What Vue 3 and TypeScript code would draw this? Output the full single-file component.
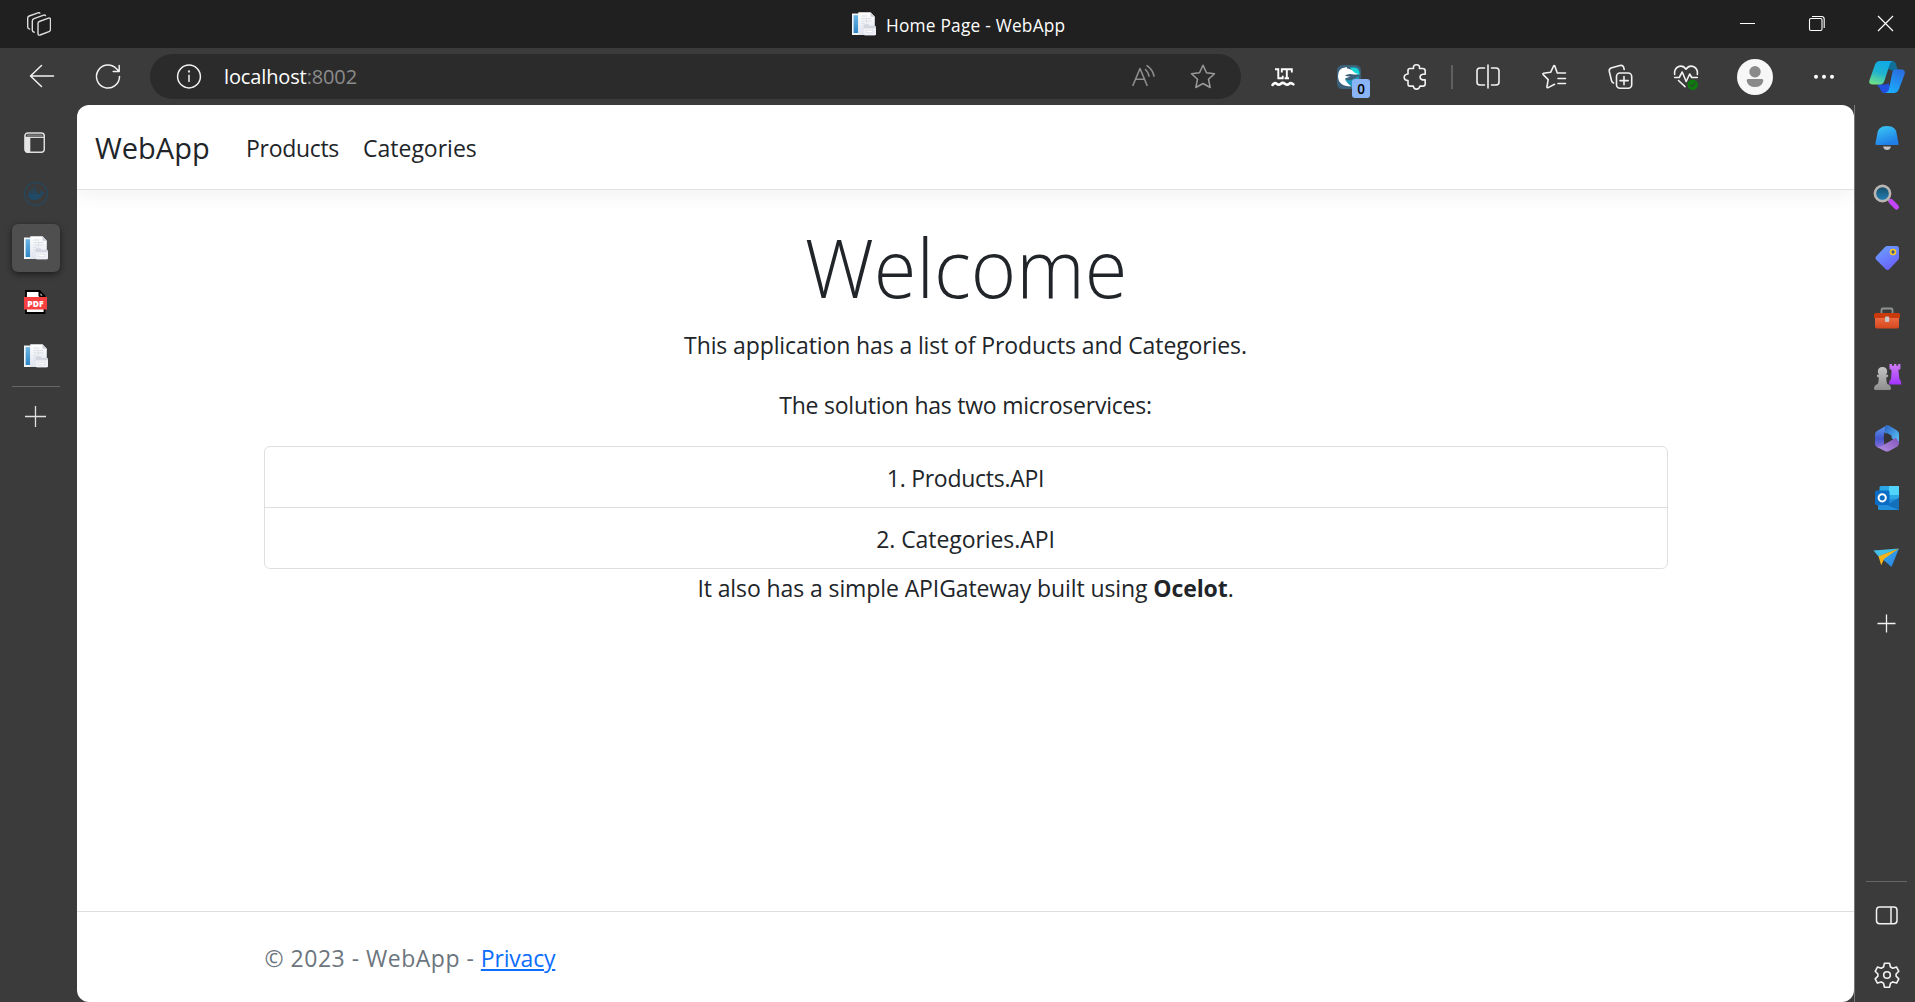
<script setup lang="ts">
interface Service {
  label: string
  key: 'products' | 'categories'
}

const services: Service[] = [
  { key: 'products', label: '1. Products.API' },
  { key: 'categories', label: '2. Categories.API' },
]
</script>

<template>
  <div class="browser">
    <svg class="defs" width="0" height="0" aria-hidden="true">
      <defs>
        <linearGradient id="gPage" x1="0" y1="0" x2="0" y2="1"><stop offset="0" stop-color="#fff" /><stop offset="1" stop-color="#dfe3ee" /></linearGradient>
        <linearGradient id="gBlue" x1="0" y1="0" x2="0" y2="1"><stop offset="0" stop-color="#6cb6e4" /><stop offset="1" stop-color="#2f86c5" /></linearGradient>
        <linearGradient id="gBell" x1="0" y1="0" x2="0.4" y2="1"><stop offset="0" stop-color="#3ccbf4" /><stop offset="1" stop-color="#1f7fe8" /></linearGradient>
        <linearGradient id="gTag" x1="0" y1="0" x2="0.6" y2="1"><stop offset="0" stop-color="#6aa5ff" /><stop offset="1" stop-color="#6a62fb" /></linearGradient>
        <linearGradient id="gLens" x1="0" y1="0" x2="0" y2="1"><stop offset="0" stop-color="#174a66" /><stop offset="1" stop-color="#2283b8" /></linearGradient>
        <linearGradient id="gBox" x1="0" y1="0" x2="0" y2="1"><stop offset="0" stop-color="#f0714b" /><stop offset="1" stop-color="#d6481d" /></linearGradient>
        <linearGradient id="gRook" x1="0" y1="0" x2="0" y2="1"><stop offset="0" stop-color="#cf7cf5" /><stop offset="1" stop-color="#a233ff" /></linearGradient>
        <linearGradient id="gPawn" x1="0" y1="0" x2="0" y2="1"><stop offset="0" stop-color="#c4c4c4" /><stop offset="1" stop-color="#8e8e8e" /></linearGradient>
        <linearGradient id="gM1" x1="0" y1="0" x2="0" y2="1"><stop offset="0" stop-color="#5f9cf0" /><stop offset="0.6" stop-color="#4257cc" /><stop offset="1" stop-color="#8a6fd8" /></linearGradient>
        <linearGradient id="gM2" x1="0" y1="0" x2="1" y2="1"><stop offset="0" stop-color="#2b62c4" /><stop offset="1" stop-color="#5cc8f8" /></linearGradient>
        <linearGradient id="gM3" x1="0" y1="1" x2="1" y2="0"><stop offset="0" stop-color="#b592e6" /><stop offset="1" stop-color="#8153b8" /></linearGradient>
        <linearGradient id="gPlane" x1="0" y1="0" x2="1" y2="1"><stop offset="0" stop-color="#36b5e8" /><stop offset="1" stop-color="#2a7be6" /></linearGradient>
        <linearGradient id="gCop1" x1="0.6" y1="0" x2="0.3" y2="1"><stop offset="0" stop-color="#0fa9e8" /><stop offset="0.5" stop-color="#1fb3cf" /><stop offset="1" stop-color="#6fe08a" /></linearGradient>
        <linearGradient id="gCop2" x1="0.6" y1="0" x2="0.2" y2="1"><stop offset="0" stop-color="#2a6fe0" /><stop offset="1" stop-color="#19b0ff" /></linearGradient>
        <symbol id="pageIcon" viewBox="0 0 24 24">
          <path d="M0 1.5h9v21.5H0z" fill="#f4f7fa" /><path d="M1.6 3.2h4.6v17.8H1.6z" fill="url(#gBlue)" />
          <path d="M6.3 0.3h12.2l4.3 4.4v18.2H6.3z" fill="url(#gPage)" />
          <path d="M18.5 0.3v4.4h4.3z" fill="#c9cdd6" />
          <path d="M9.5 4h6M9.5 6.5h10M9.5 9h10M9.5 11.5h3M9.5 14h3M9.5 16.5h1.5M14.5 6.5v5" stroke="#dcdfe6" stroke-width="1" fill="none" />
          <path d="M11.7 13.5q0-1.2 1.2-1.2h3.6l1 1.5h5.3q1.2 0 1.2 1.2v7q0 1.3-1.3 1.3h-9.7q-1.3 0-1.3-1.3z" fill="#d3d6df" />
          <path d="M11.7 16.2h12.3v5.6q0 1.5-1.3 1.5h-9.7q-1.3 0-1.3-1.5z" fill="#eff0f6" /><path d="M14.5 18.5h6v2h-6z" fill="#fff" stroke="#dcdde6" stroke-width=".6" />
        </symbol>
      </defs>
    </svg>

    <header class="titlebar">
      <svg class="workspaces" width="24" height="24" viewBox="0 0 24 24" fill="none" stroke="#dedede" stroke-width="1.4" stroke-linejoin="round" stroke-linecap="round">
        <path d="M12.3 9.5 21.5 6.2q2-.6 2 1.4v9.8q0 1.6-1.5 2.2l-9 3.4q-2 .6-2-1.4V11.4q0-1.4 1.3-1.9z" />
        <path d="M18.5 3.6q-.6-.8-1.8-.4L7 6.700Q5.300 7.300 5.300 9v9.300q0 1.600 1.900 1.900" />
        <path d="M12.800 1.200q-.6-.8-1.800-.4L2.200 4Q.7 4.600.7 6.200v8.900q0 1.600 1.900 2" />
      </svg>
      <div class="tab-title">
        <svg width="24" height="24"><use href="#pageIcon" /></svg>
        <span class="tab-name">Home Page - WebApp</span>
      </div>
      <div class="win-controls">
        <svg width="69" height="48" fill="none" stroke="#fff" stroke-width="1"><path d="M27 23.500h15" /></svg>
        <svg width="69" height="48" fill="none" stroke="#fff" stroke-width="1.1"><rect x="27.500" y="18.500" width="12.500" height="12" rx="1.500" /><path d="M30 16.500h9.500q2.700 0 2.700 2.700V28" /></svg>
        <svg width="69" height="48" fill="none" stroke="#fff" stroke-width="1.2"><path d="M27 16l15 15M42 16 27 31" /></svg>
      </div>
    </header>

    <div class="toolbar">
      <div class="nav-buttons">
        <svg width="36" height="36" fill="none" stroke="#f2f2f2" stroke-width="1.5" stroke-linecap="round" stroke-linejoin="round"><path d="M29.500 17H6.500M17.500 6.500 6.500 17l11 10.500" /></svg>
        <svg width="36" height="36" fill="none" stroke="#f2f2f2" stroke-width="1.5" stroke-linecap="round" stroke-linejoin="round"><path d="M29.500 17.500A11.500 11.500 0 1 1 26.500 9.800L29 12.300M29.200 6.500v6h-6" /></svg>
      </div>
      <div class="address">
        <svg width="36" height="36" fill="none" stroke="#f2f2f2" stroke-width="1.5"><circle cx="18" cy="17.500" r="11.400" /><path d="M18 15.800v7.200" /><circle cx="18" cy="12.500" r=".4" /></svg>
        <span class="url">localhost<span class="port">:8002</span></span>
        <svg class="read-aloud" width="36" height="36" fill="none" stroke="#8e8e8e" stroke-width="1.600" stroke-linecap="round" stroke-linejoin="round"><path d="M8 26.300 15 9.500l7 16.800M10.500 20.300h9M20.500 10.500q2.700 2.700 3.500 6.500M22 6.700q5.500 3.800 7 10.300" /></svg>
        <svg class="star" width="36" height="36" fill="none" stroke="#9a9a9a" stroke-width="1.500" stroke-linejoin="round"><path d="M18 6.200l3.500 7.500 8 1-6 5.600 1.700 8.200L18 24.500l-7.200 4 1.700-8.200-6-5.600 8-1z" /></svg>
      </div>
      <div class="actions">
        <svg width="36" height="36" fill="none" stroke="#fff"><path d="M10 10.200h3.300v9h4.400v-2.400M16.800 13.500v-3.300h10V13.500M21.800 10.200v9M19.600 19.200h4.400" stroke-width="1.900" /><path d="M7.500 26q2-3 4.200-1.200t4 0 4.200 0 4.200 0 4.300.6" stroke-width="2.600" stroke-linecap="round" stroke-linejoin="round" /></svg>
        <div class="ext">
          <svg width="36" height="36"><rect x="6" y="6" width="24" height="24" rx="5.500" fill="#3b6079" /><path d="M19 8.500h5q5 1 4.500 7.500l-6-2z" fill="#14d8d8" /><path d="M7 17Q7 9 14 8.500l1.500-.5.8 1.500q5 .8 7 4l4 1.500q-3 1-6 .3-4-1-7.500 1.200 2 1 5.500 1.300l-5 1.500q0 3 3.500 4.500l4 3.500Q7 28 7 17z" fill="#fff" /><path d="M14 20q4 2 8 .5 3-2 6-3.500-.5 8-6 11-6-3-8-8z" fill="#2298bd" /></svg>
          <span class="badge">0</span>
        </div>
        <svg width="36" height="36" fill="none" stroke="#f2f2f2" stroke-width="1.600" stroke-linejoin="round"><path d="M10 11.500q0-2 2-2h3.500q-.6-3.800 3-3.800t3 3.800h3.200q2.500 0 2.500 2.300v3.500h-2.500q-2.600.4-2.600 2.800t2.600 2.800h2.500v4q0 2.200-2.300 2.200h-3q-.6 3-3.400 3t-3.200-3H12q-2 0-2-2.200v-3.300q-3.800-.3-3.800-3.300t3.800-3.300z" /></svg>
        <i class="separator"></i>
        <svg width="36" height="36" fill="none" stroke="#f2f2f2" stroke-width="1.600" stroke-linecap="round"><path d="M18 6v23M14.500 9H10q-3 0-3 3v11q0 3 3 3h4.500M21.500 9H26q3 0 3 3v11q0 3-3 3h-4.500" /></svg>
        <svg width="36" height="36" fill="none" stroke="#f2f2f2" stroke-width="1.600" stroke-linecap="round" stroke-linejoin="round"><path d="M29.500 14h-8.200L18.800 7q-.6-1-1.200 0l-3 6.300-7 1q-1.200.4-.4 1.300l5 5-1.300 7.200q0 1.300 1.200.8l6.500-3.300M22 19.500h7.500M22 24.500h7.500" /></svg>
        <svg width="36" height="36" fill="none" stroke="#f2f2f2" stroke-width="1.600" stroke-linecap="round" stroke-linejoin="round"><rect x="14.500" y="14" width="15.200" height="15.200" rx="3.500" /><path d="M22 17.500v8.200M18 21.600h8.200M11.500 24q-1.500-.5-2-2.500L7.300 12.500q-.5-2.500 1.700-3.500L18 6.500q2.800-.5 3.600 1.600l.6 2.400" /></svg>
        <svg width="36" height="36" fill="none" stroke="#f2f2f2" stroke-width="1.600" stroke-linecap="round" stroke-linejoin="round"><path d="M6.700 15.500q-.8-5 3-7.500 5-2.500 8.300 2.200Q21.300 5.500 26.300 8q3.800 2.500 3 7.500M6.700 18.500h4.500l3-5.500 4 9.500 3.500-7.500 2 3.500h5.600M10.500 21.500l6.500 6.200" /><circle cx="24.700" cy="25.700" r="5.200" fill="#0f7b0f" stroke="none" /><path d="M22.300 25.800l1.700 1.700 3.200-3.500" stroke="#2c4a2c" stroke-width="1.200" /></svg>
        <svg class="profile" width="36" height="36"><circle cx="18" cy="18" r="18" fill="#f7f7f7" /><circle cx="18" cy="12.800" r="5.700" fill="#8a8a8a" /><path d="M11.200 20h13.600q1.900 0 1.500 2-1.500 6-8.300 6t-8.300-6q-.4-2 1.500-2z" fill="#8a8a8a" /></svg>
        <svg width="36" height="36" fill="#fff"><circle cx="10" cy="17.800" r="2" /><circle cx="18" cy="17.800" r="2" /><circle cx="26" cy="17.800" r="2" /></svg>
        <svg class="copilot" width="36" height="36"><path d="M19 2h4.500q2.500 0 3.500 3l1.500 5.500h5L24 12l-7-3z" fill="#116e96" /><path d="M8 25.500h9l2.500-1.500 2 6-4 4h-2.500q-2.500 0-3.500-3.500z" fill="#2150e0" /><path d="M10.500 2H24q-2.500.5-3.500 4l-5.300 16.500q-1.200 3-4 3H3.500Q-.5 25.500.4 21.500L6 5.500Q7.500 2 10.500 2z" fill="url(#gCop1)" /><path d="M26 10.500h6.500q4 0 3.200 4.500L30 30q-1.500 4-5 4h-9q3-.5 4-4l3-15q.8-4.500 3-4.500z" fill="url(#gCop2)" /></svg>
      </div>
    </div>

    <div class="body">
      <aside class="left">
        <svg class="tabs-toggle" width="21" height="21"><rect x=".9" y=".9" width="19.400" height="19.400" rx="3" fill="none" stroke="#dedede" stroke-width="1.500" /><path d="M1 5.300h19.500" stroke="#dedede" stroke-width="1.300" /><path d="M1 5h5.300v15.500H3.500Q1 20.500 1 18z" fill="#e4e4e4" /><path d="M3 3.200h15.500" stroke="#777" stroke-width="1.800" /></svg>
        <svg class="docker" width="24" height="24"><circle cx="12" cy="12" r="11.300" fill="none" stroke="#25485f" stroke-width="1.200" /><path d="M4 12h12.500q.6-1.500 0-2.700l.8-1.100q1.500 1 1.500 2.500 1.200-.3 2 .3-.8 1.600-2.800 1.700-2.300 5.500-8 5.300Q4.500 18 4 12zM4.500 9.500h2v2h-2zM7 9.500h2v2H7zM9.500 9.500h2v2h-2zM12 9.500h2v2h-2zM7 7h2v2H7zM9.500 7h2v2h-2zM10.500 4.500h1.500v2h-1.500z" fill="#1f4a68" /></svg>
        <div class="active-tab"><svg width="24" height="24"><use href="#pageIcon" /></svg></div>
        <svg class="pdf" width="24" height="24"><path d="M2 1h13.500l5 5v17H2z" fill="#fff" stroke="#000" stroke-width="1.800" /><path d="M14.500 0 21.500 7h-5.500q-1.500 0-1.500-1.500z" fill="#000" /><path d="M16.500 3.300l2.200 2.200h-2.200z" fill="#ddd" /><rect y="7" width="23" height="12.500" fill="#f94040" /><text x="11.400" y="16.600" text-anchor="middle" font-family="Open Sans, sans-serif" font-size="8.500" font-weight="800" fill="#fff">PDF</text></svg>
        <svg class="second-page" width="24" height="24"><use href="#pageIcon" /></svg>
        <i class="rule"></i>
        <svg class="plus" width="21" height="21" stroke="#e0e0e0" stroke-width="1.300"><path d="M10.500 0v21M0 10.500h21" /></svg>
      </aside>

      <main class="page">
        <nav class="navbar">
          <a class="brand">WebApp</a>
          <a class="link products">Products</a>
          <a class="link">Categories</a>
        </nav>
        <section class="content">
          <h1>Welcome</h1>
          <p class="line one">This application has a list of Products and Categories.</p>
          <p class="line two">The solution has two microservices:</p>
          <ol class="list">
            <li v-for="s in services" :key="s.key" :class="s.key">{{ s.label }}</li>
          </ol>
          <p class="line three">It also has a simple APIGateway built using <b>Ocelot</b>.</p>
        </section>
        <footer class="footer">© 2023 - WebApp - <a>Privacy</a></footer>
      </main>

      <aside class="right">
        <svg width="36" height="60"><path d="M8 27.500q0-9.500 10-9.500t10 9.500l1.500 8q.3 1.500-1 1.500h-21q-1.300 0-1-1.500z" fill="url(#gBell)" /><path d="M14 38.500h8q-1 3.500-4 3.500t-4-3.500z" fill="#c4c4c4" /></svg>
        <svg width="36" height="60"><path d="M19.500 31.500l3 3" stroke="#999" stroke-width="3" /><path d="M22 33.500l5.500 5.500" stroke="#c445f7" stroke-width="5" stroke-linecap="round" /><circle cx="13.500" cy="25.500" r="7.600" fill="url(#gLens)" stroke="#b9b5b2" stroke-width="2.600" /></svg>
        <svg width="36" height="60"><path d="M18.500 18h9q2.500 0 2.500 2.500v9q0 1.500-1 2.500l-8.500 9q-2 2-4 0l-9-9q-2-2 0-4l8.500-9q1-1 2.500-1z" fill="url(#gTag)" /><circle cx="24" cy="24" r="2.500" fill="#3c5099" stroke="#f5cb20" stroke-width="1.700" /></svg>
        <svg width="36" height="60"><path d="M12.500 25v-3q0-1.500 1.500-1.500h8q1.500 0 1.500 1.500v3" fill="none" stroke="#8f9393" stroke-width="1.800" /><rect x="6" y="27" width="24" height="13.500" rx="2" fill="url(#gBox)" /><path d="M5 26.500q0-1.500 1.500-1.500h23q1.500 0 1.500 1.500V30H5z" fill="#c93a0d" /><rect x="16" y="28.500" width="4.200" height="5.500" rx="1" fill="#c7c7c7" /></svg>
        <svg width="36" height="60"><path d="M20.500 16h2.400v1.800H25V16h2.400v1.800h1.800V16h2.200v5l-2 1 1 9q2 1.500 2 5.500H20q0-4 2-5.500l.6-9-2.100-1z" fill="url(#gRook)" /><path d="M13.500 19q4.700 0 4.700 4.700 0 1.700-1.200 3h2q.6 1.700-.6 2.500h-1.200q0 4.300 1 6.800 3.800 1.200 3.800 4.500 0 1.500-1.500 1.500H6.500Q5 42 5 40.500 5 37.200 8.800 36q1-2.500 1-6.800H8.600q-1.200-.8-.6-2.500h2q-1.200-1.300-1.200-3Q8.800 19 13.500 19z" fill="url(#gPawn)" /></svg>
        <svg width="36" height="60"><path d="M18 17.200 8 23q-2 1.200-2 3.500v9q0 2.300 2 3.500l2 .6 5-2.600V25l4-2.500z" fill="url(#gM1)" /><path d="M16 18.200q2.200-1.700 4.400-.5L28 22.500q2 1.200 2 3.500v9l-9-6-5-4q-1-4 0-6.800z" fill="url(#gM2)" /><path d="M7.500 38.800q2.500.4 5-.8l14.500-8.300 3 4.300v1.200q0 2.300-2 3.500l-7.800 4.200q-2.200 1.200-4.400 0z" fill="url(#gM3)" /><path d="M15.800 26.200 18 25l4 2.300q.6.400.6 1.200v3.200L18 34.400l-3.200-1.900v-4.800q0-1 1-1.500z" fill="#343438" /></svg>
        <svg width="36" height="60"><rect x="10.500" y="18" width="19.500" height="18" rx="1.500" fill="#2aa7e4" /><path d="M20 18h10v9H20z" fill="#50d4fb" /><path d="M9 31l21 0v9.500q0 1.500-1.500 1.500H10.500Q9 42 9 40.500z" fill="#1f8fdd" /><path d="M30 29.500 18 37l12 5z" fill="#1470ba" /><rect x="6" y="22.500" width="14.500" height="14.500" rx="1.500" fill="#0a6cc5" /><circle cx="13.200" cy="29.800" r="3.600" fill="none" stroke="#fff" stroke-width="2" /></svg>
        <svg width="36" height="60"><path d="M4.500 22.500 30 20.500l-20.500 8z" fill="#44bfe6" /><path d="M30 20.500 22.500 39l-10-9z" fill="url(#gPlane)" /><path d="M30 20.500 9.500 28.300l2.700 9 3-6.500z" fill="#f7b51a" /></svg>
        <svg class="add" width="36" height="36" stroke="#f2f2f2" stroke-width="1.300"><path d="M17.500 8.500v18M8.500 17.500h18" /></svg>
        <div class="bottom">
          <i class="rule"></i>
          <svg width="36" height="36" fill="none" stroke="#f2f2f2" stroke-width="1.500"><rect x="7.500" y="9" width="20.500" height="16.700" rx="3.200" /><path d="M22 9v16.700" /></svg>
          <svg class="gear" width="36" height="36" fill="none" stroke="#f2f2f2" stroke-width="1.600" stroke-linejoin="round"><path d="M15.500 6.200h5l1 3.800 2.300 1.300 3.800-1.200 2.200 4.200-2.700 2.700v2.200l2.700 2.600-2.200 4.300-3.800-1.200-2.300 1.300-1 4h-5l-1-4-2.300-1.300-3.800 1.200-2.200-4.300 2.700-2.600v-2.200l-2.700-2.700 2.200-4.200 3.800 1.200 2.300-1.300z" /><circle cx="18" cy="18" r="3.300" /></svg>
        </div>
      </aside>
    </div>
  </div>
</template>

<style>
body { margin: 0; background: #3b3b3b; overflow: hidden; }
</style>

<style scoped>
.browser { height: 1002px; display: flex; flex-direction: column; background: #3b3b3b; font-family: "Open Sans", "Noto Sans", sans-serif; overflow: hidden; }
.defs { position: absolute; }
svg { display: block; flex: none; }
.titlebar { height: 48px; flex: none; background: #202020; display: flex; box-sizing: border-box; padding-left: 27px; }
.workspaces { margin-top: 12px; }
.tab-title { display: flex; gap: 10px; align-items: center; color: #fff; font-size: 17.300px; letter-spacing: .23px; height: 48px; margin-left: 801px; }
.tab-name { white-space: nowrap; line-height: 48px; margin-top: 4px; }
.win-controls { display: flex; margin: 0 -5px 0 auto; }
.toolbar { height: 57px; flex: none; display: flex; align-items: flex-start; }
.nav-buttons { display: flex; gap: 30px; width: 150px; padding: 11px 0 0 24px; box-sizing: border-box; }
.address { width: 1091px; height: 45px; margin-top: 6px; box-sizing: border-box; padding: 0 20px 0 21px; border-radius: 23px; background: #2b2b2b; display: flex; align-items: center; }
.url { margin: 0 0 1px 17px; color: #fff; font-size: 20px; letter-spacing: -.13px; line-height: 43px; flex: 1; white-space: nowrap; }
.port { color: #8b8b8b; }
.read-aloud { margin-right: 24px; }
.actions { display: flex; padding: 11px 0 0 9px; }
.actions > svg, .ext { width: 36px; margin: 0 15px; }
.actions > .ext { margin-right: 16px; }
.ext { position: relative; }
.badge { position: absolute; left: 21px; top: 20px; width: 18px; height: 19px; border-radius: 3px; background: #8ab4f8; color: #000; font-size: 13.500px; font-weight: 600; line-height: 20px; text-align: center; }
.separator { width: 2px; height: 24px; margin: 6px 2px 0; background: #606060; }
.actions > .profile { margin: 0 18px; }
.actions > .copilot { margin-left: 12px; margin-right: 0; }
.body { flex: 1; display: flex; min-height: 0; }
.left { width: 77px; flex: none; display: flex; flex-direction: column; align-items: flex-start; }
.tabs-toggle { margin: 27px 0 0 24px; }
.docker { margin: 29px 0 0 24px; }
.active-tab { width: 48px; height: 48px; margin: 18px 0 0 12px; border-radius: 6px; background: #4f4f4f; box-shadow: 0 2px 6px rgba(0, 0, 0, .55); display: flex; align-items: center; justify-content: center; }
.pdf { margin: 18px 0 0 24px; }
.second-page { margin: 30px 0 0 24px; }
.rule { display: block; height: 1px; background: #666; }
.left .rule { width: 48px; margin: 18px 0 0 12px; }
.plus { margin: 19px 0 0 25px; }
.page { width: 1777px; flex: none; background: #fff; border-radius: 12px; overflow: hidden; color: #212529; display: flex; flex-direction: column; }
.navbar { height: 84px; flex: none; border-bottom: 1px solid #dee2e6; box-shadow: 0 6px 18px rgba(0, 0, 0, .05); display: flex; align-items: center; padding-left: 18px; }
.brand { font-size: 29px; width: 151px; }
.link { font-size: 23px; margin-top: 2px; }
.products { width: 117px; letter-spacing: -.3px; }
.content { flex: 1; width: 1404px; margin: 24px auto 0; text-align: center; }
h1 { margin: 0 0 12px; height: 101px; font-size: 82px; line-height: 105px; font-weight: 300; transform: scaleX(.945); }
.line { margin: 0 0 24px; font-size: 23px; line-height: 36px; white-space: pre; }
.one { letter-spacing: -.11px; }
.two { margin-bottom: 23px; letter-spacing: -.24px; }
.list { margin: 0; padding: 0; list-style: none; border: 1px solid #dfdfdf; border-radius: 6px; font-size: 23px; }
.list li { height: 60px; line-height: 62px; }
.list li + li { border-top: 1px solid #dfdfdf; }
.list .products { width: auto; letter-spacing: -.27px; }
.list .categories { letter-spacing: -.07px; }
.three { margin: 1px 0 0; letter-spacing: -.1px; }
.footer { height: 90px; flex: none; border-top: 1px solid #dfdfdf; box-sizing: content-box; padding-left: 187.500px; font-size: 23px; line-height: 92px; letter-spacing: .5px; color: #6c757d; white-space: pre; }
.footer a { color: #0d6efd; letter-spacing: -.2px; text-decoration: underline; }
.right { flex: 1; box-sizing: border-box; border-left: 1px solid #777; padding: 3px 0 0 14px; display: flex; flex-direction: column; }
.add { margin-top: 18px; }
.bottom { margin-top: auto; height: 121px; }
.bottom .rule { width: 41px; margin: 0 0 16px -3px; }
.gear { margin-top: 23px; }
</style>
